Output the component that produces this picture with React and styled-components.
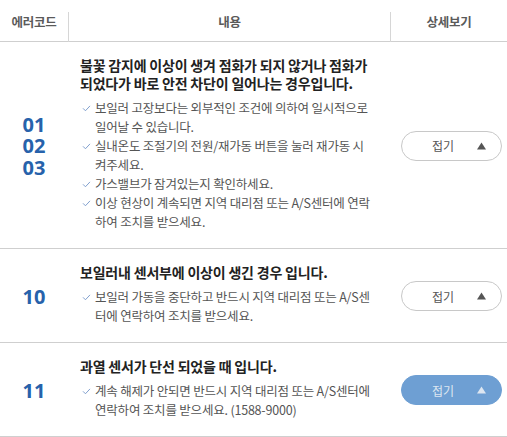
import React from "react";
import styled, { createGlobalStyle } from "styled-components";

const GlobalStyle = createGlobalStyle`
  body {
    margin: 0;
    background: #fff;
    font-family: "Noto Sans CJK KR", "Noto Sans", sans-serif;
  }
`;

const rows = [
  {
    code: "01\n02\n03",
    title: "불꽃 감지에 이상이 생겨 점화가 되지 않거나 점화가 되었다가 바로 안전 차단이 일어나는 경우입니다.",
    items: [
      "보일러 고장보다는 외부적인 조건에 의하여 일시적으로 일어날 수 있습니다.",
      "실내온도 조절기의 전원/재가동 버튼을 눌러 재가동 시켜주세요.",
      "가스밸브가 잠겨있는지 확인하세요.",
      "이상 현상이 계속되면 지역 대리점 또는 A/S센터에 연락하여 조치를 받으세요.",
    ],
  },
  {
    code: "10",
    title: "보일러내 센서부에 이상이 생긴 경우 입니다.",
    items: ["보일러 가동을 중단하고 반드시 지역 대리점 또는 A/S센터에 연락하여 조치를 받으세요."],
  },
  {
    code: "11",
    title: "과열 센서가 단선 되었을 때 입니다.",
    items: ["계속 해제가 안되면 반드시 지역 대리점 또는 A/S센터에 연락하여 조치를 받으세요. (1588-9000)"],
    active: true,
  },
];

export default function App() {
  return (
    <>
      <GlobalStyle />
      <Table>
        <HeadRow>
          <HeadCell>에러코드</HeadCell>
          <HeadCell divided>내용</HeadCell>
          <HeadCell divided>상세보기</HeadCell>
        </HeadRow>
        {rows.map((row) => (
          <Row key={row.code}>
            <Code>
              <CodeText>{row.code}</CodeText>
            </Code>
            <Content>
              <Title>{row.title}</Title>
              <List>
                {row.items.map((item) => (
                  <Item key={item}>
                    <Check viewBox="0 0 10 8">
                      <path d="M1 3.8 L3.8 6.6 L9 1" />
                    </Check>
                    {item}
                  </Item>
                ))}
              </List>
            </Content>
            <Action>
              <Toggle active={row.active}>
                <span>접기</span>
                <Arrow viewBox="0 0 10 8">
                  <path d="M5 0 L10 8 L0 8 Z" />
                </Arrow>
              </Toggle>
            </Action>
          </Row>
        ))}
      </Table>
    </>
  );
}

const Table = styled.div`
  width: 507px;
`;

const HeadRow = styled.div`
  display: grid;
  grid-template-columns: 68px 322px 117px;
  height: 42px;
  border-bottom: 1px solid #cfcfcf;
  box-sizing: border-box;
`;

const HeadCell = styled.div`
  display: flex;
  align-items: center;
  justify-content: center;
  margin-top: 12px;
  padding-bottom: 11px;
  font-size: 12.5px;
  font-weight: 700;
  color: #5a5a5a;
  letter-spacing: -0.3px;
  border-left: ${(p) => (p.divided ? "1px solid #d6d6d6" : "none")};
`;

const Row = styled.div`
  display: grid;
  grid-template-columns: 68px 322px 117px;
  border-bottom: 1px solid #cfcfcf;
`;

const Code = styled.div`
  display: flex;
  align-items: center;
  justify-content: center;
  padding-top: 2px;
`;

const CodeText = styled.div`
  white-space: pre-line;
  text-align: center;
  font-family: "Noto Sans", sans-serif;
  font-size: 20px;
  font-weight: 700;
  line-height: 21.5px;
  color: #2762ab;
`;

const Content = styled.div`
  padding: 14px 16px 17px 12px;
`;

const Title = styled.div`
  font-size: 14px;
  font-weight: 700;
  line-height: 18px;
  color: #222;
  letter-spacing: -0.2px;
  margin-bottom: 6px;
`;

const List = styled.ul`
  margin: 0;
  padding: 0;
  list-style: none;
`;

const Item = styled.li`
  position: relative;
  padding-left: 15px;
  font-size: 12.5px;
  line-height: 19px;
  color: #555;
  letter-spacing: -0.2px;
`;

const Check = styled.svg`
  position: absolute;
  left: 2px;
  top: 6.5px;
  width: 9px;
  height: 7px;
  fill: none;
  stroke: #7c9ccc;
  stroke-width: 1.1;
`;

const Action = styled.div`
  display: flex;
  align-items: center;
  justify-content: flex-end;
  padding: 1px 5px 0 0;
`;

const Toggle = styled.div`
  display: flex;
  align-items: center;
  justify-content: space-between;
  box-sizing: border-box;
  width: 101px;
  height: 30px;
  padding: 0 15px 0 30px;
  border-radius: 15px;
  border: 1px solid ${(p) => (p.active ? "#6e9fd3" : "#c8c8c8")};
  background: ${(p) => (p.active ? "#6e9fd3" : "#fff")};
  color: ${(p) => (p.active ? "#dde6f1" : "#555")};
  font-size: 12px;
`;

const Arrow = styled.svg`
  width: 9px;
  height: 8px;
  fill: currentColor;
`;
